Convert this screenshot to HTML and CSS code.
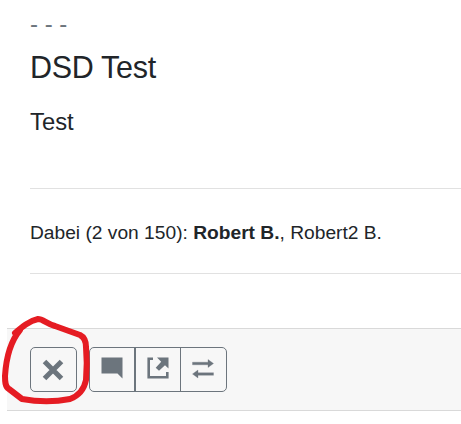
FILE: index.html
```html
<!DOCTYPE html>
<html lang="de">
<head>
<meta charset="utf-8">
<title>DSD Test</title>
<link rel="stylesheet" href="styles.css">
</head>
<body>
<main class="card">
  <div class="card-body">
    <div class="date">- - -</div>
    <h1 class="title">DSD Test</h1>
    <p class="description">Test</p>
    <p class="participants">Dabei (2 von 150): <strong>Robert B.</strong>, Robert2 B.</p>
  </div>
  <footer class="card-footer">
    <button class="btn btn-close" aria-label="Absagen">
      <svg width="22" height="22" viewBox="0 0 22 22"><path d="M2.5 2.5L19.5 19.5M19.5 2.5L2.5 19.5" stroke="currentColor" stroke-width="5"/></svg>
    </button>
    <div class="btn-group">
      <button class="btn" aria-label="Kommentar">
        <svg width="22" height="22" viewBox="0 0 22 22"><path d="M.5 .5H21.5V21.5L16.5 16.5H.5Z" fill="currentColor"/></svg>
      </button>
      <button class="btn" aria-label="Teilen">
        <svg width="22" height="22" viewBox="0 0 22 22"><path d="M6 1.7H1.7V20.3H20.3V15" fill="none" stroke="currentColor" stroke-width="2.6"/><path d="M10 .5H21.5V11.5L18 8.300L12 13.800L8.700 10.800L14.200 4.800Z" fill="currentColor"/></svg>
      </button>
      <button class="btn" aria-label="Wiederholen">
        <svg width="22" height="22" viewBox="0 0 22 22"><path d="M.5 5.2H16V2.5L21.5 6.5L16 10.5V7.8H.5ZM21.5 15.7H6V13L.5 17L6 21V18.3H21.5Z" fill="currentColor" stroke="currentColor" stroke-width=".3"/></svg>
      </button>
    </div>
    <svg class="marker" width="95" height="95" viewBox="0 310 95 95"><path d="M15 333C22 327 29 321 38 319C43 319 47 324 55 326L80 335C84 337 86 341 86 347C87 358 87 369 86 380C84 390 78 396 70 399C55 402 38 402 22 399L9 389C5 387 5 381 5 376C6 360 10 342 20 330"/></svg>
  </footer>
</main>
</body>
</html>
```
FILE: styles.css
```css
* {
  box-sizing: border-box;
}

body {
  margin: 0;
  background: #fff;
  color: #212529;
  font-family: "Liberation Sans", Arial, sans-serif;
  overflow: hidden;
}

.card {
  padding-left: 7px;
}

.card-body {
  height: 328px;
  padding: 9px 0 0 23px;
}

.date {
  color: #6c757d;
  font-size: 24px;
  line-height: 29px;
}

.title {
  margin: 11px 0 0;
  font-size: 30.5px;
  font-weight: 400;
  letter-spacing: -0.3px;
  line-height: 36px;
}

.description {
  margin: 22px 0 52px;
  font-size: 23.8px;
  line-height: 29px;
}

.participants {
  margin: 0;
  height: 86px;
  padding-top: 1px;
  border-top: 1px solid #e1e1e1;
  border-bottom: 1px solid #e1e1e1;
  font-size: 19.2px;
  line-height: 86px;
  white-space: nowrap;
}

.card-footer {
  position: relative;
  display: flex;
  gap: 12px;
  height: 83px;
  padding: 18px 23px;
  border-top: 1px solid #d9d9d9;
  border-bottom: 1px solid #d9d9d9;
  background: #f7f7f7;
}

.btn {
  display: flex;
  align-items: center;
  justify-content: center;
  width: 47px;
  height: 45px;
  padding: 0;
  border: 1px solid #6c757d;
  border-radius: 5px;
  background: transparent;
  color: #6c757d;
}

.btn-close {
  padding-right: 1px;
}

.btn-group {
  display: flex;
}

.btn-group .btn {
  padding: 0 1px 3px 0;
}

.btn-group .btn:first-child {
  width: 46px;
}

.btn-group .btn:nth-child(2) {
  border-left-width: 2px;
}

.btn-group .btn:not(:first-child) {
  margin-left: -1px;
  border-top-left-radius: 0;
  border-bottom-left-radius: 0;
}

.btn-group .btn:not(:last-child) {
  border-top-right-radius: 0;
  border-bottom-right-radius: 0;
}

.marker {
  position: absolute;
  top: -19px;
  left: -7px;
  overflow: visible;
  fill: none;
  stroke: #e51c23;
  stroke-width: 6;
  stroke-linecap: round;
  stroke-linejoin: round;
  pointer-events: none;
}
```
